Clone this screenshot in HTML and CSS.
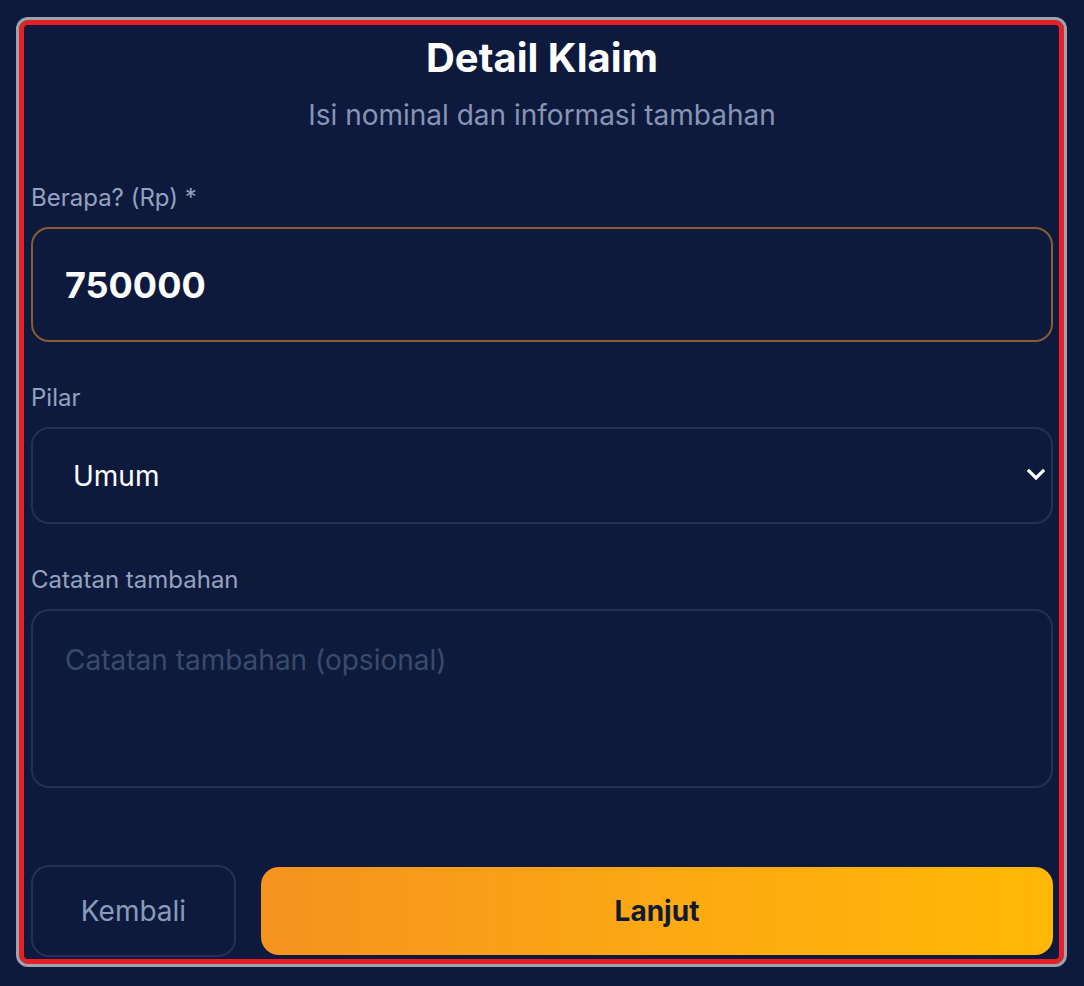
FILE: index.html
```html
<!DOCTYPE html>
<html lang="id">
<head>
<meta charset="utf-8">
<title>Detail Klaim</title>
<link rel="stylesheet" href="styles.css">
</head>
<body>
<div class="frame">
  <div class="header">
    <h1 class="title">Detail Klaim</h1>
    <p class="subtitle">Isi nominal dan informasi tambahan</p>
  </div>
  <div class="form">
    <div class="field field-first">
      <label class="label" for="amount">Berapa? (Rp) *</label>
      <input id="amount" class="control control-amount" type="text" value="750000">
    </div>
    <div class="field">
      <label class="label">Pilar</label>
      <div class="control control-select">
        <span class="select-text">Umum</span>
        <svg class="chevron" width="18" height="12" viewBox="0 0 18 12"><polyline points="2,2 9,9 16,2" fill="none" stroke="#ffffff" stroke-width="3.2" stroke-linecap="square"/></svg>
      </div>
    </div>
    <div class="field">
      <label class="label" for="notes">Catatan tambahan</label>
      <textarea id="notes" class="control control-notes" placeholder="Catatan tambahan (opsional)"></textarea>
    </div>
  </div>
  <div class="actions">
    <button class="btn btn-back">Kembali</button>
    <button class="btn btn-next">Lanjut</button>
  </div>
</div>
</body>
</html>
```

FILE: styles.css
```css
html, body {
  margin: 0;
  padding: 0;
  background: #0e1a3d;
}
body {
  font-family: "Inter", "Noto Sans", sans-serif;
  padding: 17px 17px 17px 16px;
  box-sizing: border-box;
  height: 986px;
}
.frame {
  box-sizing: border-box;
  height: 950px;
  border: 3px solid #9ea3ad;
  border-radius: 12px;
  box-shadow: inset 0 0 0 5px #e52027;
  padding: 8px 11px 0 12px;
  display: flex;
  flex-direction: column;
}
.header {
  text-align: center;
}
.title {
  margin: 6px 0 0 0;
  font-size: 40px;
  line-height: 48px;
  font-weight: 700;
  color: #ffffff;
}
.subtitle {
  margin: 17px 0 0 0;
  font-size: 28px;
  line-height: 32px;
  color: #8794b4;
}
.form {
  display: flex;
  flex-direction: column;
}
.field {
  display: flex;
  flex-direction: column;
  margin-top: 42px;
}
.field-first {
  margin-top: 53px;
}
.label {
  font-size: 24px;
  line-height: 28px;
  color: #94a2bf;
  margin-bottom: 15px;
}
.control {
  box-sizing: border-box;
  width: 100%;
  background: #0e1a3d;
  border: 2px solid #253151;
  border-radius: 18px;
  font-family: "Inter", "Noto Sans", sans-serif;
  color: #ffffff;
  outline: none;
}
.control-amount {
  height: 115px;
  border-color: #8a5c31;
  padding: 0 32px;
  font-size: 36px;
  font-weight: 700;
}
.control-select {
  height: 97px;
  display: flex;
  align-items: center;
  justify-content: space-between;
  padding: 0 6px 0 40px;
}
.select-text {
  font-size: 28px;
  color: #ffffff;
}
.chevron {
  display: block;
  margin-top: -2px;
}
.control-notes {
  height: 179px;
  resize: none;
  padding: 32px 32px;
  font-size: 28px;
  line-height: 34px;
  display: block;
}
.control-notes::placeholder {
  color: #3a4a6b;
}
.actions {
  display: flex;
  gap: 25px;
  margin-top: 77px;
  align-items: center;
}
.btn {
  font-family: "Inter", "Noto Sans", sans-serif;
  font-size: 28px;
  cursor: pointer;
  border-radius: 18px;
}
.btn-back {
  width: 205px;
  height: 92px;
  background: transparent;
  border: 2px solid #253151;
  color: #8a9abb;
}
.btn-next {
  flex: 1;
  height: 88px;
  border: none;
  font-weight: 700;
  color: #111a33;
  background: linear-gradient(90deg, #f5931f 0%, #fdaa12 55%, #ffb806 100%);
}
```
